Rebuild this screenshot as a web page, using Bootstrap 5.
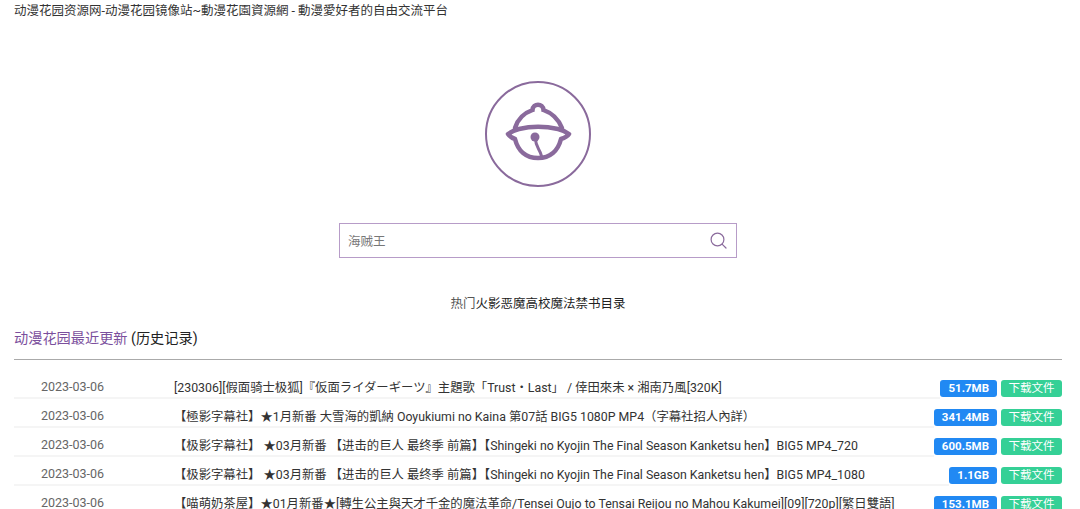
<!DOCTYPE html>
<html lang="zh-CN">
<head>
    <meta charset="UTF-8">
    <meta name="viewport" content="width=device-width, initial-scale=1.0">
    <title>动漫花园资源网</title>
    <link href="https://cdn.jsdelivr.net/npm/bootstrap@5.3.3/dist/css/bootstrap.min.css" rel="stylesheet">
    <style>
        html, body { height: 509px; overflow: hidden; }
        body { font-family: Roboto, "Noto Sans CJK SC", sans-serif; font-size: 12.5px; color: #444; background: #fff; }
        .site-wrap { padding: 0 18px 0 14px; }
        .site-title { font-size: 12.5px; line-height: 18px; padding-top: 2px; color: #333; height: 19px; }
        .logo-wrap { height: 204px; padding-top: 62px; }
        .search-box { width: 398px; height: 35px; border: 1px solid #b79cc8; padding: 0 8px; }
        .search-box input { font-size: 12.5px; font-family: inherit; outline: 0; border: 0; padding: 4px 0 0; }
        .search-box input::placeholder { color: #777; }
        .hot-words { margin-top: 37px; height: 18px; line-height: 18px; font-size: 12.5px; color: #222; }
        .hot-words span { color: #555; }
        .recent-head { margin-top: 13px; line-height: 24px; font-size: 14.2px; color: #222; border-bottom: 1px solid #aaa; height: 34px; }
        .recent-head a { color: #7b4f9d; text-decoration: none; }
        .recent-list { margin-top: 16px; }
        .item-row { height: 29px; }
        .item-main { border-bottom: 2px solid #f5f5f5; height: 23px; padding-top: 2px; line-height: 19px; min-width: 0; }
        .item-date { width: 160px; padding-left: 27px; color: #666; line-height: 18px; }
        .item-name { color: #333; white-space: nowrap; font-size: 12.35px; line-height: 20px; }
        .size-tag { background: #2189f3; color: #fff; font-size: 11.5px; font-weight: 700; height: 17px; line-height: 17px; padding: 0 8px; border-radius: 3px; margin-top: 4px; }
        .down-btn { background: #35d096; color: #fff; font-size: 11.5px; width: 61px; height: 17px; line-height: 17px; text-align: center; border-radius: 3px; margin-top: 4px; margin-left: 4px; text-decoration: none; }
    </style>
</head>
<body>
    <div class="site-wrap">
        <div class="site-title">动漫花园资源网-动漫花园镜像站~動漫花園資源網 - 動漫愛好者的自由交流平台</div>

        <div class="logo-wrap d-flex justify-content-center">
            <svg width="106" height="106" viewBox="0 0 106 106" fill="none" stroke="#8a6a9c" aria-label="logo">
                <circle cx="53" cy="53" r="52" stroke-width="2"/>
                <path d="M30 47C33 37 39 32 47.5 29C48 22 58 22 58.5 29C67 32 73 37 77 47" stroke-width="4.5" stroke-linecap="round"/>
                <path d="M23 53C26 51 30 49 34 48C46 45 60 45 73 48C77 49 81 51 84 53C82 56 79 57 76 58C73 70 65 77 53 77C41 77 33 70 30 58C27 57 25 56 23 53Z" stroke-width="4.5" stroke-linejoin="round"/>
                <circle cx="50" cy="56" r="4.5" fill="#8a6a9c" stroke="none"/>
                <path d="M50.5 58C50.5 66 55 68 56.5 75" stroke-width="3" stroke-linecap="round"/>
            </svg>
        </div>

        <div class="d-flex justify-content-center">
            <div class="search-box d-flex align-items-center">
                <input class="flex-grow-1" type="text" placeholder="海贼王">
                <svg width="18" height="18" viewBox="0 0 18 18" fill="none" stroke="#8a6a9c" stroke-width="1.2">
                    <circle cx="7.5" cy="7.5" r="6.4"/>
                    <path d="M12.3 12.3l3.7 3.7" stroke-linecap="round"/>
                </svg>
            </div>
        </div>

        <div class="hot-words text-center"><span>热门</span>火影恶魔高校魔法禁书目录</div>

        <div class="recent-head"><a href="#">动漫花园最近更新</a> (历史记录)</div>

        <div class="recent-list">
            <div class="item-row d-flex">
                <div class="item-main d-flex flex-grow-1"><div class="item-date flex-shrink-0">2023-03-06</div><div class="item-name">[230306][假面骑士极狐]『仮面ライダーギーツ』主題歌「Trust・Last」 / 倖田來未 × 湘南乃風[320K]</div></div>
                <div class="size-tag">51.7MB</div><a class="down-btn" href="#">下载文件</a>
            </div>
            <div class="item-row d-flex">
                <div class="item-main d-flex flex-grow-1"><div class="item-date flex-shrink-0">2023-03-06</div><div class="item-name">【極影字幕社】★1月新番 大雪海的凱納 Ooyukiumi no Kaina 第07話 BIG5 1080P MP4（字幕社招人內詳）</div></div>
                <div class="size-tag">341.4MB</div><a class="down-btn" href="#">下载文件</a>
            </div>
            <div class="item-row d-flex">
                <div class="item-main d-flex flex-grow-1"><div class="item-date flex-shrink-0">2023-03-06</div><div class="item-name">【极影字幕社】 ★03月新番 【进击的巨人 最终季 前篇】【Shingeki no Kyojin The Final Season Kanketsu hen】BIG5 MP4_720</div></div>
                <div class="size-tag">600.5MB</div><a class="down-btn" href="#">下载文件</a>
            </div>
            <div class="item-row d-flex">
                <div class="item-main d-flex flex-grow-1"><div class="item-date flex-shrink-0">2023-03-06</div><div class="item-name">【极影字幕社】 ★03月新番 【进击的巨人 最终季 前篇】【Shingeki no Kyojin The Final Season Kanketsu hen】BIG5 MP4_1080</div></div>
                <div class="size-tag">1.1GB</div><a class="down-btn" href="#">下载文件</a>
            </div>
            <div class="item-row d-flex">
                <div class="item-main d-flex flex-grow-1"><div class="item-date flex-shrink-0">2023-03-06</div><div class="item-name">【喵萌奶茶屋】★01月新番★[轉生公主與天才千金的魔法革命/Tensei Oujo to Tensai Reijou no Mahou Kakumei][09][720p][繁日雙語]</div></div>
                <div class="size-tag">153.1MB</div><a class="down-btn" href="#">下载文件</a>
            </div>
        </div>
    </div>
    <script src="https://cdn.jsdelivr.net/npm/bootstrap@5.3.3/dist/js/bootstrap.bundle.min.js"></script>
</body>
</html>
